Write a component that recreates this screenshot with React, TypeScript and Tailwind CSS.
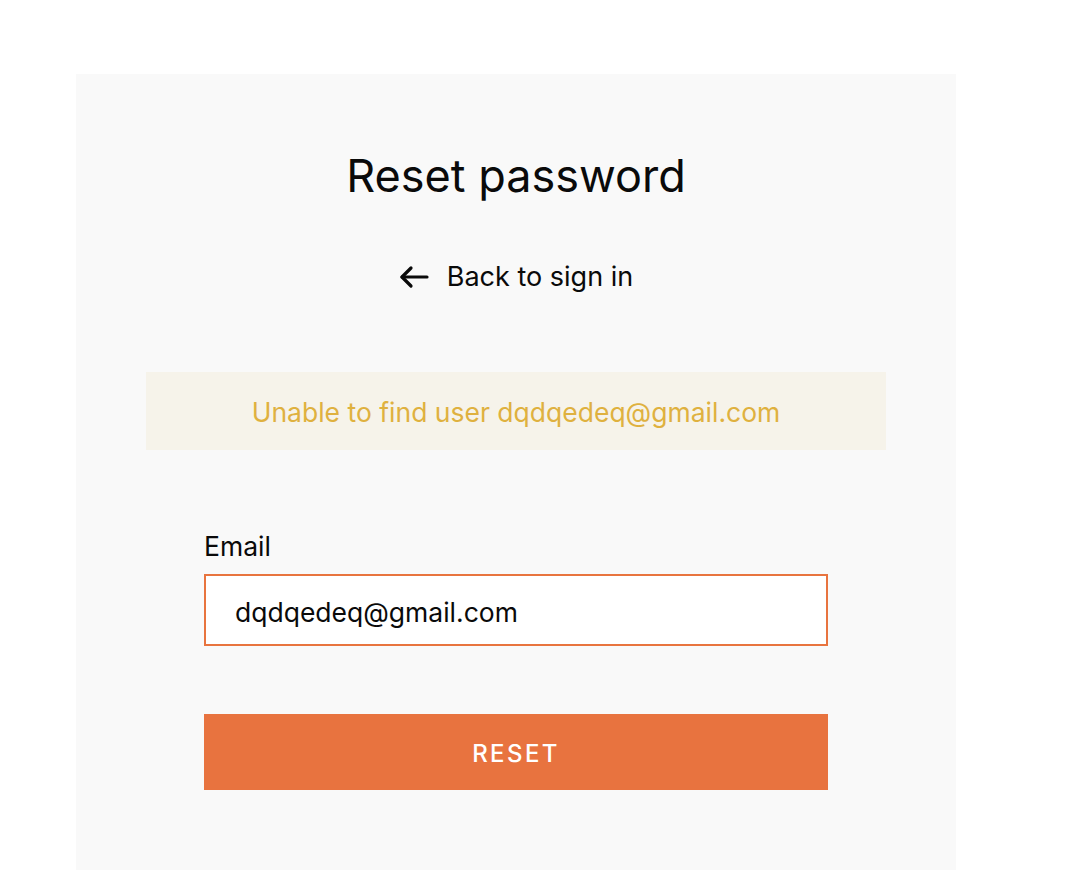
import React from "react";

export default function App() {
  return (
    <div className="min-h-[896px] w-full bg-white" style={{ fontFamily: "Inter, 'Noto Sans', sans-serif" }}>
      <div className="ml-[76px] pt-[74px]">
        <div className="flex h-[796px] w-[880px] flex-col items-center bg-[#f9f9f9] pt-[74px]">
          <h1 className="text-[45px] leading-[56px] font-normal text-[#0a0a0a]">Reset password</h1>
          <a className="mt-[57px] flex items-center gap-[18px] text-[27px] leading-[32px] text-[#0a0a0a]">
            <svg width="30" height="24" viewBox="0 0 30 24" fill="none" stroke="#0a0a0a" strokeWidth="3.2" strokeLinecap="round" strokeLinejoin="round">
              <path d="M28 12H3" />
              <path d="M12 3L3 12L12 21" />
            </svg>
            <span>Back to sign in</span>
          </a>
          <div className="mt-[79px] flex h-[78px] w-[740px] items-center justify-center bg-[#f6f3ea] pt-[3px] text-[26.5px] text-[#dfb13f]">
            Unable to find user dqdqedeq@gmail.com
          </div>
          <div className="mt-[79px] flex w-[624px] flex-col">
            <label className="text-[26.5px] leading-[34px] text-[#0a0a0a]">Email</label>
            <div className="mt-[11px] flex h-[72px] items-center border-2 border-[#e8743f] bg-white pt-[6px] pl-[29px] text-[26.5px] text-[#0a0a0a]">
              dqdqedeq@gmail.com
            </div>
            <button className="mt-[68px] flex h-[76px] w-full items-center justify-center bg-[#e8733f] pt-[4px] text-[24px] font-medium tracking-[0.1em] text-white">
              RESET
            </button>
          </div>
        </div>
      </div>
    </div>
  );
}
